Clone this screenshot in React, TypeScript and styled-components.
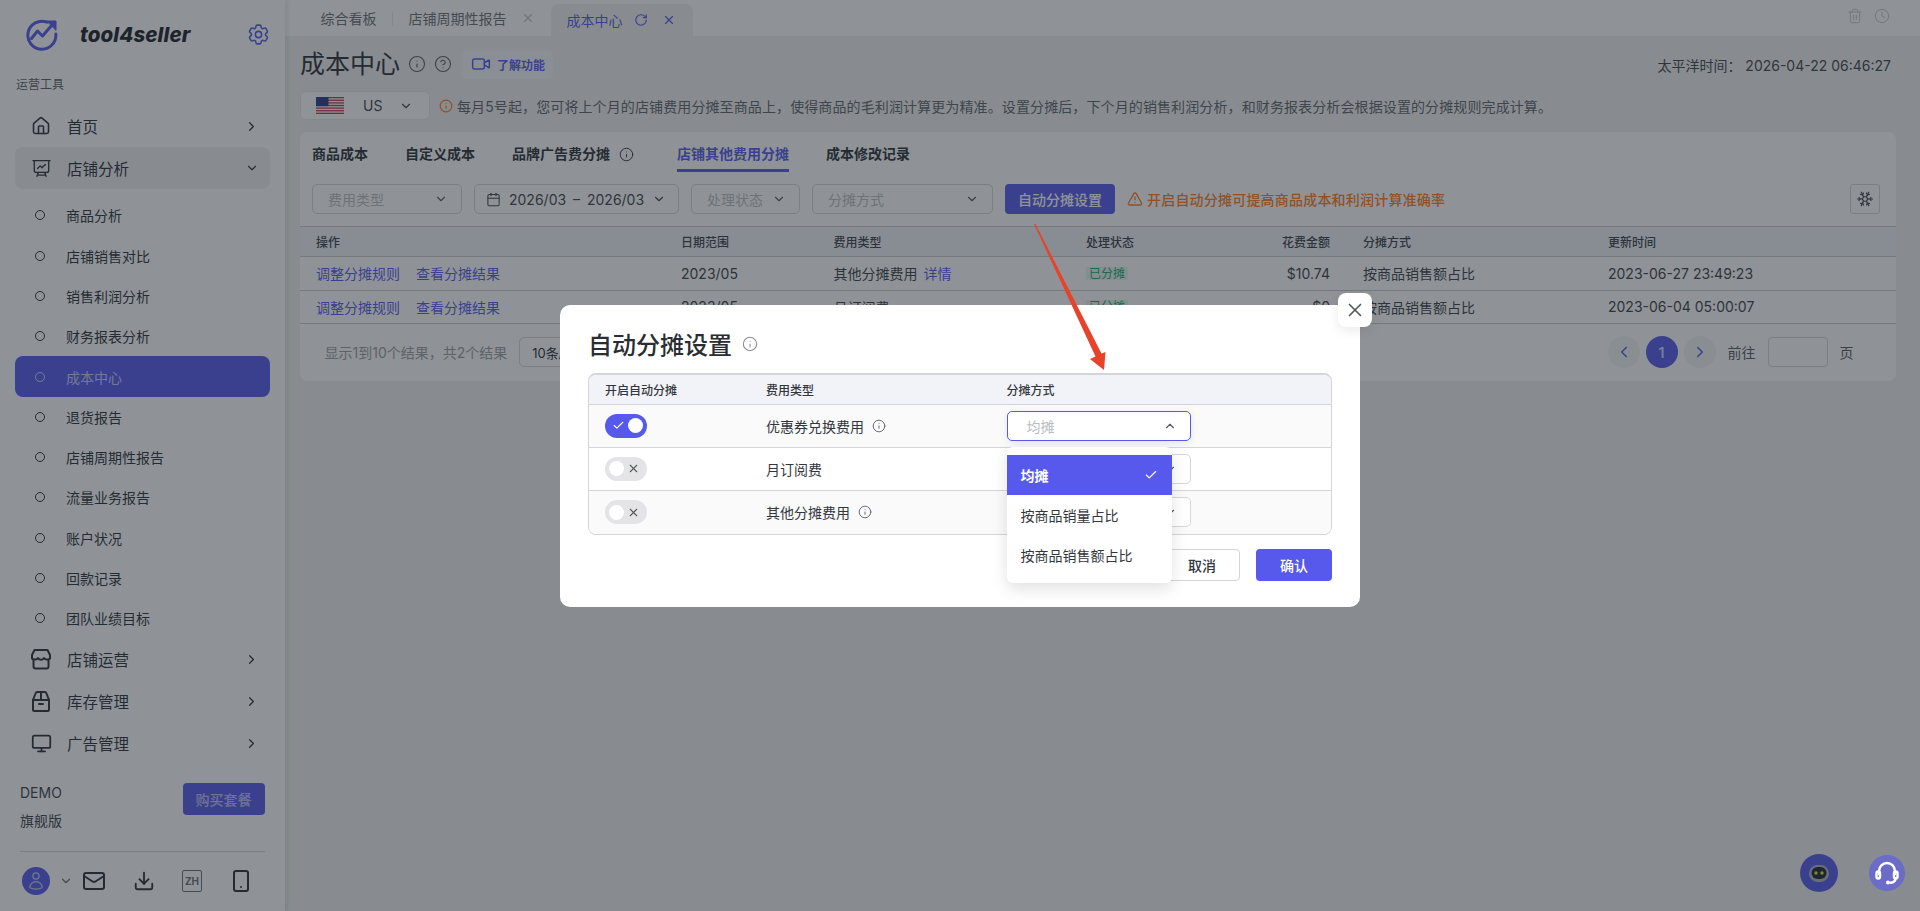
import React from "react";
import styled, { createGlobalStyle } from "styled-components";
import {
  Calendar, Check, ChevronDown, ChevronLeft, ChevronRight, ChevronUp, CircleHelp, Clock, Download, House,
  Info, Mail, Monitor, RotateCw, Smartphone, Snowflake, Trash2, TriangleAlert, Video, X,
} from "lucide-react";
import { HiOutlineCog6Tooth, HiOutlinePresentationChartLine, HiOutlineUser } from "react-icons/hi2";

const PRIMARY = "#5659ec";
const INK = "#2a2f36";

const Global = createGlobalStyle`
  html, body { margin: 0; padding: 0; height: 100%; background: #f0f1f0; }
  * { box-sizing: border-box; }
  body { font-family: Inter, "Noto Sans CJK SC", sans-serif; font-size: 14px; color: ${INK}; overflow: hidden; }
`;

const Page = styled.div`
  position: relative;
  display: flex;
  width: 100vw;
  height: 100vh;
  overflow: hidden;
  background: #f0f1f0;
`;

/* ---------- sidebar ---------- */
const Sidebar = styled.aside`
  flex: 0 0 284.5px;
  display: flex;
  flex-direction: column;
  height: 100%;
  background: #fff;
  box-shadow: 2px 0 6px rgba(0, 0, 0, 0.1);
  z-index: 1;
`;
const Brand = styled.div`
  display: flex;
  align-items: center;
  height: 68px;
  padding-left: 26px;
`;
const BrandName = styled.span`
  margin-left: 22px;
  font-family: Inter, sans-serif;
  font-size: 20.5px;
  font-weight: 800;
  font-style: italic;
  letter-spacing: 0.1px;
  color: #1c2026;
`;
const GearSlot = styled.span`
  display: flex;
  margin-left: auto;
  margin-right: 14px;
  color: ${PRIMARY};
`;
const GroupLabel = styled.div`
  height: 37px;
  padding: 8px 0 0 16px;
  font-size: 12px;
  line-height: 18px;
  color: #5a5f66;
`;
const Nav = styled.nav`
  flex: 1;
  min-height: 0;
  overflow: hidden;
  padding: 0 15px;
`;
const MainItem = styled.div<{ $open?: boolean }>`
  display: flex;
  align-items: center;
  height: 42px;
  margin-bottom: ${(p) => (p.$open ? "6.2px" : "0")};
  padding: 0 11px 0 15px;
  border-radius: 8px;
  font-size: 15.5px;
  color: ${INK};
  background: ${(p) => (p.$open ? "#f0f1f2" : "transparent")};
`;
const MainLabel = styled.span`
  margin-left: 15px;
  padding-bottom: 1px;
  flex: 1;
`;
const IconBox = styled.span`
  display: flex;
  width: 22px;
  justify-content: center;
  color: ${INK};
`;
const SubItem = styled.div<{ $active?: boolean }>`
  display: flex;
  align-items: center;
  height: 40.3px;
  padding-left: 20px;
  border-radius: 8px;
  font-size: 14px;
  color: ${(p) => (p.$active ? "#ffffffb0" : INK)};
  background: ${(p) => (p.$active ? PRIMARY : "transparent")};
`;
const Dot = styled.i`
  width: 10px;
  height: 10px;
  margin-right: 21px;
  border: 1px solid currentColor;
  border-radius: 50%;
`;
const SideFoot = styled.div`
  flex: 0 0 132px;
  padding: 0 20px;
`;
const Plan = styled.div`
  display: flex;
  justify-content: space-between;
  height: 73px;
  border-bottom: 1px solid #d5d7da;
`;
const PlanText = styled.div`
  font-size: 14px;
  line-height: 28px;
  color: #3a3f46;
`;
const BuyButton = styled.button`
  width: 82px;
  height: 32px;
  margin-top: 4px;
  border: 0;
  border-radius: 4px;
  background: ${PRIMARY};
  color: #ffffffa0;
  font: 500 14px Inter, "Noto Sans CJK SC", sans-serif;
`;
const ToolRow = styled.div`
  display: flex;
  align-items: center;
  height: 58px;
  padding-left: 2px;
  color: ${INK};
`;
const Avatar = styled.span`
  display: flex;
  align-items: center;
  justify-content: center;
  width: 28px;
  height: 28px;
  border-radius: 50%;
  background: ${PRIMARY};
  color: #c9cbe8;
`;
const CaretSlot = styled.span`
  display: flex;
  margin: 0 9px;
  color: #666;
`;
const ToolIcons = styled.span`
  display: flex;
  align-items: center;
  gap: 27px;
`;
const LangBox = styled.span`
  display: flex;
  align-items: center;
  justify-content: center;
  width: 20px;
  height: 22px;
  border: 1.5px solid #6b6f75;
  border-radius: 2px;
  font-size: 10px;
  font-weight: 700;
  color: #6b6f75;
`;

/* ---------- main ---------- */
const Main = styled.main`
  flex: 1;
  min-width: 0;
  display: flex;
  flex-direction: column;
`;
const TabBar = styled.div`
  display: flex;
  flex: 0 0 36px;
  align-items: flex-end;
  padding-left: 20px;
  background: #fff;
`;
const PageTab = styled.div<{ $active?: boolean; $sep?: boolean }>`
  display: flex;
  align-items: center;
  height: ${(p) => (p.$active ? "32px" : "36px")};
  padding: 0 ${(p) => (p.$active ? "17px" : "16px")} 0 16px;
  border-radius: ${(p) => (p.$active ? "8px 8px 0 0" : "0")};
  background: ${(p) => (p.$active ? "#f0f1f0" : "transparent")};
  color: ${(p) => (p.$active ? PRIMARY : "#6a6e73")};
  position: relative;
  &::after {
    content: "";
    display: ${(p) => (p.$sep ? "block" : "none")};
    position: absolute;
    right: 0;
    top: 12px;
    height: 14px;
    width: 1px;
    background: #e8e9ea;
  }
`;
const TabIcon = styled.span<{ $gap: number; $muted?: boolean }>`
  display: flex;
  margin-left: ${(p) => p.$gap}px;
  color: ${(p) => (p.$muted ? "#c0c2c5" : "inherit")};
`;
const BarTools = styled.div`
  display: flex;
  align-items: center;
  gap: 11px;
  height: 36px;
  margin-left: auto;
  padding: 0 30px 4px 0;
  color: #c4c6c9;
`;
const Content = styled.div`
  display: flex;
  flex-direction: column;
  flex: 1;
  padding: 0 24.5px 0 15.5px;
`;
const TitleRow = styled.div`
  display: flex;
  align-items: center;
  height: 30px;
  margin-top: 13px;
  padding-right: 4.5px;
`;
const PageTitle = styled.h1`
  margin: 0;
  font-size: 25px;
  font-weight: 400;
  line-height: 30px;
  color: ${INK};
`;
const HeadIcon = styled.span`
  display: flex;
  margin-left: 8px;
  color: #5a5f66;
`;
const LearnPill = styled.span`
  display: flex;
  align-items: center;
  gap: 6px;
  height: 29px;
  margin-left: 9px;
  padding: 0 8px 0 10px;
  border-radius: 6px;
  background: #f5f5fb;
  font-size: 12px;
  font-weight: 600;
  color: ${PRIMARY};
`;
const ClockText = styled.span`
  margin-left: auto;
  color: #3f444a;
  padding-top: 1px;
`;
const RegionRow = styled.div`
  display: flex;
  align-items: center;
  height: 29px;
  margin-top: 12px;
`;
const RegionSelect = styled.div`
  display: flex;
  align-items: center;
  width: 130px;
  height: 29px;
  padding-left: 15px;
  border: 1px solid #e8e9ea;
  border-radius: 6px;
  background: #fff;
  color: #3f444a;
`;
const RegionName = styled.span`
  margin: 0 17px 0 19px;
`;
const Notice = styled.div`
  display: flex;
  align-items: center;
  gap: 4px;
  margin-left: 9px;
  letter-spacing: 0.11px;
  color: #5d6268;
`;
const OrangeIcon = styled.span`
  display: flex;
  color: #ff7a1a;
`;
const Card = styled.section`
  height: 249px;
  margin-top: 12px;
  border-radius: 8px;
  background: #fff;
`;
const CardTabs = styled.div`
  display: flex;
  gap: 37px;
  padding: 0 12px;
`;
const CardTab = styled.div<{ $active?: boolean }>`
  display: flex;
  align-items: center;
  gap: 9px;
  height: 40px;
  padding: 12px 0 5px;
  border-bottom: 3px solid ${(p) => (p.$active ? PRIMARY : "transparent")};
  margin-left: ${(p) => (p.$active ? "6px" : "0")};
  font-weight: 600;
  line-height: 20px;
  color: ${(p) => (p.$active ? PRIMARY : INK)};
`;
const FilterRow = styled.div`
  display: flex;
  align-items: center;
  gap: 12px;
  margin-top: 12px;
  padding: 0 15.5px 0 12px;
`;
const Select = styled.div<{ $w: number; $h?: number; $focus?: boolean; $pl?: number }>`
  display: flex;
  align-items: center;
  justify-content: space-between;
  flex: 0 0 ${(p) => p.$w}px;
  width: ${(p) => p.$w}px;
  height: ${(p) => p.$h ?? 30}px;
  padding: 0 13px 0 ${(p) => p.$pl ?? 15}px;
  border: 1px solid ${(p) => (p.$focus ? PRIMARY : "#d4d6d9")};
  border-radius: 5px;
  color: #b9bcc1;
  background: #fff;
  box-shadow: ${(p) => (p.$focus ? "0 2px 8px rgba(0,0,0,.08)" : "none")};
`;
const SelectArrow = styled.span`
  display: flex;
  color: #55595f;
`;
const DateBox = styled.div`
  display: flex;
  align-items: center;
  flex: 0 0 205px;
  height: 30px;
  padding: 0 12px 0 11px;
  border: 1px solid #d4d6d9;
  border-radius: 5px;
  color: #3f444a;
`;
const DateText = styled.span`
  flex: 1;
  margin-left: 8px;
  word-spacing: 3px;
`;
const PrimaryButton = styled.button<{ $w: number; $h: number }>`
  width: ${(p) => p.$w}px;
  height: ${(p) => p.$h}px;
  padding: 0;
  border: 0;
  border-radius: 4px;
  background: ${PRIMARY};
  color: #fff;
  font: 500 14px Inter, "Noto Sans CJK SC", sans-serif;
`;
const Warning = styled.div`
  display: flex;
  align-items: center;
  gap: 4px;
  font-weight: 500;
  letter-spacing: 0.2px;
  color: #ff7a1a;
`;
const GhostIconButton = styled.span`
  display: flex;
  align-items: center;
  justify-content: center;
  width: 30px;
  height: 30px;
  margin-left: auto;
  border: 1px solid #d4d6d9;
  border-radius: 3px;
  color: #3f444a;
`;

const tableCols = "365px 152.5px 252.5px 130px 147px 245px 1fr";
const THead = styled.div`
  display: grid;
  grid-template-columns: ${tableCols};
  align-items: center;
  height: 31px;
  margin-top: 12px;
  border-top: 1px solid #c8cbd0;
  border-bottom: 1px solid #c8cbd0;
  background: #f1f2f9;
  font-size: 12px;
  font-weight: 500;
  color: #3a3f46;
`;
const TRow = styled.div`
  display: grid;
  grid-template-columns: ${tableCols};
  align-items: center;
  height: 33.5px;
  border-bottom: 1px solid #c8cbd0;
  color: #3a3f46;
`;
const TCell = styled.div<{ $right?: boolean }>`
  display: flex;
  align-items: center;
  gap: 6px;
  padding-left: 16px;
  justify-content: ${(p) => (p.$right ? "flex-end" : "flex-start")};
  padding-right: ${(p) => (p.$right ? "17px" : "0")};
`;
const Link = styled.span`
  color: ${PRIMARY};
  & + & {
    margin-left: 10px;
  }
`;
const Badge = styled.span`
  padding: 0 3px;
  height: 13px;
  font-size: 12px;
  line-height: 13px;
  color: #1aa86b;
  background: #e6f7ee;
`;
const Pager = styled.div`
  display: flex;
  align-items: center;
  height: 56px;
  padding: 0 36px 0 24.5px;
`;
const PagerInfo = styled.span`
  color: #9a9da2;
`;
const PageSize = styled.div`
  display: flex;
  align-items: center;
  width: 90px;
  height: 30px;
  margin-left: 12px;
  padding-left: 12px;
  border: 1px solid #d4d6d9;
  border-radius: 5px;
  font-size: 13px;
`;
const PagerRight = styled.div`
  display: flex;
  align-items: center;
  gap: 6px;
  margin-left: auto;
  color: #55595f;
`;
const PageDot = styled.span<{ $active?: boolean }>`
  display: flex;
  align-items: center;
  justify-content: center;
  width: 32px;
  height: 32px;
  border-radius: 50%;
  background: ${(p) => (p.$active ? PRIMARY : "#f3f4f6")};
  color: ${(p) => (p.$active ? "#ffffffc0" : PRIMARY)};
  font-size: 14px;
  font-weight: 600;
`;
const PagerLabel = styled.span`
  margin: 0 6px;
`;
const PagerInput = styled.span`
  width: 60px;
  height: 30px;
  border: 1px solid #d4d6d9;
  border-radius: 4px;
`;

const RoundBot = styled.div`
  position: absolute;
  right: 82px;
  bottom: 19px;
  display: flex;
  align-items: center;
  justify-content: center;
  width: 38px;
  height: 38px;
  border-radius: 50%;
  background: ${PRIMARY};
`;

/* ---------- modal ---------- */
const Backdrop = styled.div`
  position: absolute;
  inset: 0;
  z-index: 10;
  display: flex;
  align-items: center;
  justify-content: center;
  background: rgba(32, 40, 48, 0.5);
`;
const Modal = styled.div`
  position: relative;
  width: 800px;
  height: 302px;
  padding: 25px 28px 0 28px;
  border-radius: 10px;
  background: #fff;
`;
const CloseButton = styled.span`
  position: absolute;
  top: -12px;
  right: -12px;
  display: flex;
  align-items: center;
  justify-content: center;
  width: 34px;
  height: 34px;
  border-radius: 8px;
  background: #fff;
  color: #55595f;
  box-shadow: 0 4px 12px rgba(0, 0, 0, 0.08);
`;
const ModalTitle = styled.div`
  display: flex;
  align-items: center;
  gap: 10px;
  height: 28px;
  font-size: 24px;
  font-weight: 500;
  color: #2a2d33;
`;
const TitleInfo = styled.span`
  display: flex;
  color: #8a8d92;
`;
const ModalTable = styled.div`
  margin-top: 15px;
  border: 1px solid #d3d5d9;
  border-top-width: 2px;
  border-radius: 8px;
`;
const modalCols = "161px 240.500px 1fr";
const ModalHead = styled.div`
  display: grid;
  grid-template-columns: ${modalCols};
  align-items: center;
  height: 30px;
  border-bottom: 1px solid #d3d5d9;
  border-radius: 7px 7px 0 0;
  background: #f2f3f8;
  font-size: 12px;
  font-weight: 500;
  color: #33373d;
`;
const ModalRow = styled.div<{ $tint?: boolean; $last?: boolean }>`
  display: grid;
  grid-template-columns: ${modalCols};
  align-items: center;
  height: 43px;
  border-bottom: ${(p) => (p.$last ? "0" : "1px solid #d3d5d9")};
  border-radius: ${(p) => (p.$last ? "0 0 7px 7px" : "0")};
  background: ${(p) => (p.$tint ? "#fafafb" : "#fff")};
  color: #33373d;
`;
const ModalCell = styled.div`
  position: relative;
  display: flex;
  align-items: center;
  gap: 8px;
  padding-left: 16px;
`;
const InfoMark = styled.span`
  display: flex;
  color: #55595f;
`;
const Toggle = styled.span<{ $on?: boolean }>`
  position: relative;
  display: flex;
  align-items: center;
  justify-content: ${(p) => (p.$on ? "flex-start" : "flex-end")};
  width: 42px;
  height: 24px;
  padding: 0 7px;
  border-radius: 12px;
  background: ${(p) => (p.$on ? PRIMARY : "#e4e4e6")};
  color: ${(p) => (p.$on ? "#fff" : "#55595f")};
  &::after {
    content: "";
    position: absolute;
    top: 4.5px;
    ${(p) => (p.$on ? "right: 4px;" : "left: 4px;")}
    width: 15px;
    height: 15px;
    border-radius: 50%;
    background: #fff;
  }
`;
const Dropdown = styled.div`
  position: absolute;
  top: 36px;
  left: 16px;
  z-index: 5;
  width: 165px;
  padding: 8px 0;
  border-radius: 6px;
  background: #fff;
  box-shadow: 0 6px 16px rgba(0, 0, 0, 0.12);
`;
const Option = styled.div<{ $active?: boolean }>`
  display: flex;
  align-items: center;
  justify-content: space-between;
  height: 40px;
  padding: 0 14px;
  font-weight: ${(p) => (p.$active ? 600 : 400)};
  color: ${(p) => (p.$active ? "#fff" : "#33373d")};
  background: ${(p) => (p.$active ? PRIMARY : "#fff")};
`;
const ModalFoot = styled.div`
  display: flex;
  justify-content: flex-end;
  gap: 16px;
  margin-top: 14px;
`;
const CancelButton = styled.button`
  width: 76px;
  height: 32px;
  padding: 0;
  border: 1px solid #d3d5d9;
  border-radius: 4px;
  background: #fff;
  color: #33373d;
  font: 500 14px Inter, "Noto Sans CJK SC", sans-serif;
`;
const Arrow = styled.svg`
  position: absolute;
  left: 1030px;
  top: 220px;
  z-index: 20;
`;
const SupportBubble = styled.div`
  position: absolute;
  right: 15px;
  bottom: 20px;
  z-index: 15;
  display: flex;
  align-items: center;
  justify-content: center;
  width: 36px;
  height: 36px;
  border-radius: 50%;
  background: #6a6cc8;
`;

const LogoMark = () => (
  <svg width="32" height="33" viewBox="0 0 32 33" fill="none" stroke={PRIMARY} strokeWidth="3" strokeLinecap="round" strokeLinejoin="round">
    <path d="M21 4.2A14 14 0 1 0 29.8 16" />
    <path d="M5.5 20.5 11.5 13l5 5L26 7" />
    <path d="M21 3h9v9z" fill={PRIMARY} strokeWidth="1" />
  </svg>
);

const StoreIcon = () => (
  <svg width="20" height="22" viewBox="0 0 20 22" fill="none" stroke="currentColor" strokeWidth="2" strokeLinecap="round" strokeLinejoin="round">
    <path d="M3.5 2h13l2.5 5v3.5a3 3 0 0 1-3 1 3 3 0 0 1-3-1.5 3.5 3.5 0 0 1-6 0 3 3 0 0 1-3 1.500 3 3 0 0 1-3-1V7z" />
    <path d="M2.500 12v6.500a2 2 0 0 0 2 2h11a2 2 0 0 0 2-2V12" />
  </svg>
);

const BoxIcon = () => (
  <svg width="18" height="21" viewBox="0 0 18 21" fill="none" stroke="currentColor" strokeWidth="2" strokeLinecap="round" strokeLinejoin="round">
    <path d="M1 9v9.500a1.500 1.500 0 0 0 1.500 1.500h13a1.500 1.500 0 0 0 1.500-1.500V9" />
    <path d="M1 9l2.500-6.500A2 2 0 0 1 5.500 1h7a2 2 0 0 1 2 1.500L17 9z" />
    <path d="M9 1v8M7 13h4" />
  </svg>
);

const UsFlag = () => (
  <svg width="28" height="17" viewBox="0 0 28 17">
    <rect width="28" height="17" fill="#fff" />
    {[0, 2, 4, 6, 8, 10, 12].map((i) => (
      <rect key={i} y={(i * 17) / 13} width="28" height={17 / 13} fill="#c8324a" />
    ))}
    <rect width="12.500" height="9.200" fill="#2b3a86" />
  </svg>
);

const BotFace = () => (
  <svg width="24" height="24" viewBox="0 0 24 24">
    <rect x="2" y="4" width="20" height="17" rx="8.500" fill="#aeb4c6" />
    <rect x="4.500" y="6" width="15" height="12" rx="6" fill="#20242c" />
    <circle cx="9" cy="12" r="1.700" fill="#dde24a" />
    <circle cx="15" cy="12" r="1.700" fill="#dde24a" />
  </svg>
);

const HeadsetIcon = () => (
  <svg width="28" height="28" viewBox="0 0 28 28" fill="none" stroke="#fff" strokeWidth="2.400" strokeLinecap="round">
    <path d="M6 15v-3a8 8 0 0 1 16 0v3" />
    <rect x="3.500" y="12.500" width="3.500" height="7" rx="1.700" />
    <rect x="21" y="12.500" width="3.500" height="7" rx="1.700" />
    <path d="M22.500 19.500c0 2.500-2 4-5 4.200" />
    <circle cx="15" cy="23.500" r="2" fill="#fff" stroke="none" />
  </svg>
);

const subItems = ["商品分析", "店铺销售对比", "销售利润分析", "财务报表分析", "成本中心", "退货报告", "店铺周期性报告", "流量业务报告", "账户状况", "回款记录", "团队业绩目标"];

const TopLevel = ({ icon, label, open }: { icon: React.ReactNode; label: string; open?: boolean }) => (
  <MainItem $open={open}>
    <IconBox>{icon}</IconBox>
    <MainLabel>{label}</MainLabel>
    {open ? <ChevronDown size={14} /> : <ChevronRight size={15} />}
  </MainItem>
);

const rows = [
  { date: "2023/05", type: "其他分摊费用", detail: true, amount: "$10.74", time: "2023-06-27 23:49:23" },
  { date: "2023/05", type: "月订阅费", detail: false, amount: "$0", time: "2023-06-04 05:00:07" },
];

export default function App() {
  return (
    <Page>
      <Global />
      <Sidebar>
        <Brand>
          <LogoMark />
          <BrandName>tool4seller</BrandName>
          <GearSlot>
            <HiOutlineCog6Tooth size={25} />
          </GearSlot>
        </Brand>
        <GroupLabel>运营工具</GroupLabel>
        <Nav>
          <TopLevel icon={<House size={20} strokeWidth={1.9} />} label="首页" />
          <TopLevel icon={<HiOutlinePresentationChartLine size={21} />} label="店铺分析" open />
          {subItems.map((s) => (
            <SubItem key={s} $active={s === "成本中心"}>
              <Dot />
              {s}
            </SubItem>
          ))}
          <TopLevel icon={<StoreIcon />} label="店铺运营" />
          <TopLevel icon={<BoxIcon />} label="库存管理" />
          <TopLevel icon={<Monitor size={21} strokeWidth={2} />} label="广告管理" />
        </Nav>
        <SideFoot>
          <Plan>
            <PlanText>
              DEMO
              <br />
              旗舰版
            </PlanText>
            <BuyButton>购买套餐</BuyButton>
          </Plan>
          <ToolRow>
            <Avatar>
              <HiOutlineUser size={20} />
            </Avatar>
            <CaretSlot>
              <ChevronDown size={14} />
            </CaretSlot>
            <ToolIcons>
              <Mail size={24} strokeWidth={2} />
              <Download size={22} strokeWidth={2} />
              <LangBox>ZH</LangBox>
              <Smartphone size={24} strokeWidth={2} />
            </ToolIcons>
          </ToolRow>
        </SideFoot>
      </Sidebar>

      <Main>
        <TabBar>
          <PageTab $sep>综合看板</PageTab>
          <PageTab>
            店铺周期性报告
            <TabIcon $gap={14} $muted>
              <X size={14} />
            </TabIcon>
          </PageTab>
          <PageTab $active>
            成本中心
            <TabIcon $gap={11}>
              <RotateCw size={14} />
            </TabIcon>
            <TabIcon $gap={14}>
              <X size={14} />
            </TabIcon>
          </PageTab>
          <BarTools>
            <Trash2 size={16} strokeWidth={1.5} />
            <Clock size={16} strokeWidth={1.5} />
          </BarTools>
        </TabBar>
        <Content>
          <TitleRow>
            <PageTitle>成本中心</PageTitle>
            <HeadIcon>
              <Info size={18} strokeWidth={1.5} />
            </HeadIcon>
            <HeadIcon>
              <CircleHelp size={18} strokeWidth={1.5} />
            </HeadIcon>
            <LearnPill>
              <Video size={20} strokeWidth={1.8} />
              了解功能
            </LearnPill>
            <ClockText>太平洋时间： 2026-04-22 06:46:27</ClockText>
          </TitleRow>
          <RegionRow>
            <RegionSelect>
              <UsFlag />
              <RegionName>US</RegionName>
              <ChevronDown size={14} />
            </RegionSelect>
            <Notice>
              <OrangeIcon>
                <Info size={14} />
              </OrangeIcon>
              每月5号起，您可将上个月的店铺费用分摊至商品上，使得商品的毛利润计算更为精准。设置分摊后，下个月的销售利润分析，和财务报表分析会根据设置的分摊规则完成计算。
            </Notice>
          </RegionRow>
          <Card>
            <CardTabs>
              <CardTab>商品成本</CardTab>
              <CardTab>自定义成本</CardTab>
              <CardTab>
                品牌广告费分摊
                <Info size={15} strokeWidth={1.5} />
              </CardTab>
              <CardTab $active>店铺其他费用分摊</CardTab>
              <CardTab>成本修改记录</CardTab>
            </CardTabs>
            <FilterRow>
              <Select $w={150}>
                费用类型
                <SelectArrow>
                  <ChevronDown size={14} />
                </SelectArrow>
              </Select>
              <DateBox>
                <Calendar size={15} strokeWidth={1.7} />
                <DateText>2026/03 – 2026/03</DateText>
                <ChevronDown size={14} />
              </DateBox>
              <Select $w={109}>
                处理状态
                <SelectArrow>
                  <ChevronDown size={14} />
                </SelectArrow>
              </Select>
              <Select $w={181}>
                分摊方式
                <SelectArrow>
                  <ChevronDown size={14} />
                </SelectArrow>
              </Select>
              <PrimaryButton $w={110} $h={30}>自动分摊设置</PrimaryButton>
              <Warning>
                <TriangleAlert size={16} />
                开启自动分摊可提高商品成本和利润计算准确率
              </Warning>
              <GhostIconButton>
                <Snowflake size={18} strokeWidth={1.6} />
              </GhostIconButton>
            </FilterRow>
            <THead>
              <TCell>操作</TCell>
              <TCell>日期范围</TCell>
              <TCell>费用类型</TCell>
              <TCell>处理状态</TCell>
              <TCell $right>花费金额</TCell>
              <TCell>分摊方式</TCell>
              <TCell>更新时间</TCell>
            </THead>
            {rows.map((r) => (
              <TRow key={r.time}>
                <TCell>
                  <Link>调整分摊规则</Link>
                  <Link>查看分摊结果</Link>
                </TCell>
                <TCell>{r.date}</TCell>
                <TCell>
                  {r.type}
                  {r.detail && <Link>详情</Link>}
                </TCell>
                <TCell>
                  <Badge>已分摊</Badge>
                </TCell>
                <TCell $right>{r.amount}</TCell>
                <TCell>按商品销售额占比</TCell>
                <TCell>{r.time}</TCell>
              </TRow>
            ))}
            <Pager>
              <PagerInfo>显示1到10个结果，共2个结果</PagerInfo>
              <PageSize>10条/页</PageSize>
              <PagerRight>
                <PageDot>
                  <ChevronLeft size={18} />
                </PageDot>
                <PageDot $active>1</PageDot>
                <PageDot>
                  <ChevronRight size={18} />
                </PageDot>
                <PagerLabel>前往</PagerLabel>
                <PagerInput />
                <PagerLabel>页</PagerLabel>
              </PagerRight>
            </Pager>
          </Card>
        </Content>
      </Main>

      <RoundBot>
        <BotFace />
      </RoundBot>

      <Backdrop>
        <Modal>
          <CloseButton>
            <X size={22} strokeWidth={1.8} />
          </CloseButton>
          <ModalTitle>
            自动分摊设置
            <TitleInfo>
              <Info size={16} strokeWidth={1.6} />
            </TitleInfo>
          </ModalTitle>
          <ModalTable>
            <ModalHead>
              <ModalCell>开启自动分摊</ModalCell>
              <ModalCell>费用类型</ModalCell>
              <ModalCell>分摊方式</ModalCell>
            </ModalHead>
            <ModalRow $tint>
              <ModalCell>
                <Toggle $on>
                  <Check size={13} />
                </Toggle>
              </ModalCell>
              <ModalCell>
                优惠券兑换费用
                <InfoMark>
                  <Info size={14} strokeWidth={1.5} />
                </InfoMark>
              </ModalCell>
              <ModalCell>
                <Select $w={184} $focus $pl={19}>
                  均摊
                  <SelectArrow>
                    <ChevronUp size={14} />
                  </SelectArrow>
                </Select>
                <Dropdown>
                  <Option $active>
                    均摊
                    <Check size={14} />
                  </Option>
                  <Option>按商品销量占比</Option>
                  <Option>按商品销售额占比</Option>
                </Dropdown>
              </ModalCell>
            </ModalRow>
            <ModalRow>
              <ModalCell>
                <Toggle>
                  <X size={13} />
                </Toggle>
              </ModalCell>
              <ModalCell>月订阅费</ModalCell>
              <ModalCell>
                <Select $w={184} $pl={19}>
                  均摊
                  <SelectArrow>
                    <ChevronDown size={14} />
                  </SelectArrow>
                </Select>
              </ModalCell>
            </ModalRow>
            <ModalRow $tint $last>
              <ModalCell>
                <Toggle>
                  <X size={13} />
                </Toggle>
              </ModalCell>
              <ModalCell>
                其他分摊费用
                <InfoMark>
                  <Info size={14} strokeWidth={1.5} />
                </InfoMark>
              </ModalCell>
              <ModalCell>
                <Select $w={184} $pl={19}>
                  均摊
                  <SelectArrow>
                    <ChevronDown size={14} />
                  </SelectArrow>
                </Select>
              </ModalCell>
            </ModalRow>
          </ModalTable>
          <ModalFoot>
            <CancelButton>取消</CancelButton>
            <PrimaryButton $w={76} $h={32}>确认</PrimaryButton>
          </ModalFoot>
        </Modal>
        <Arrow width="80" height="155" viewBox="1030 220 80 155">
          <polygon points="1034,224 1035.500,224 1101.500,353.500 1105.500,352 1104,370 1090,359 1095.500,356.500" fill="#e8432a" />
        </Arrow>
      </Backdrop>
      <SupportBubble>
        <HeadsetIcon />
      </SupportBubble>
    </Page>
  );
}
